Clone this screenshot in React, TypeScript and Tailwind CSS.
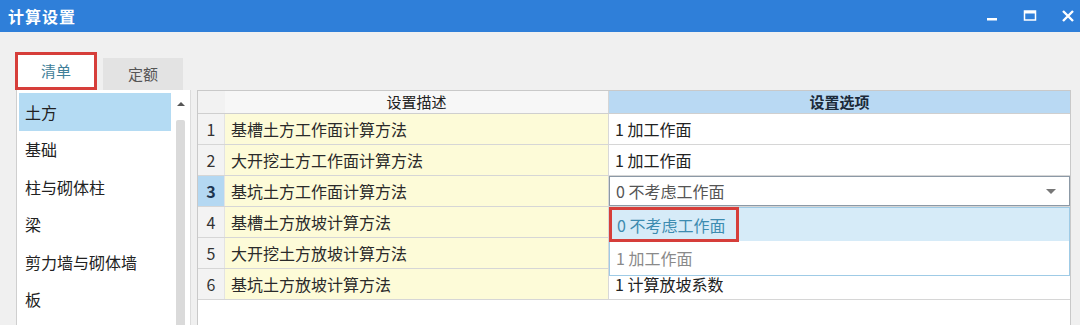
import React from 'react';

const FONT = { fontFamily: '"Noto Sans CJK SC", "Noto Sans", "Liberation Sans", sans-serif' };

const CATEGORIES = ['土方', '基础', '柱与砌体柱', '梁', '剪力墙与砌体墙', '板'];

const ROWS = [
  { no: 1, desc: '基槽土方工作面计算方法', opt: '1 加工作面' },
  { no: 2, desc: '大开挖土方工作面计算方法', opt: '1 加工作面' },
  { no: 3, desc: '基坑土方工作面计算方法', opt: '0 不考虑工作面' },
  { no: 4, desc: '基槽土方放坡计算方法', opt: '' },
  { no: 5, desc: '大开挖土方放坡计算方法', opt: '' },
  { no: 6, desc: '基坑土方放坡计算方法', opt: '1 计算放坡系数' },
];

function TitleBar() {
  return (
    <div className="h-[32px] bg-[#2f7fd9] flex items-center justify-between pl-[8px] pr-[5px]">
      <span className="text-white text-[16px] font-bold tracking-[1px]">计算设置</span>
      <div className="flex items-center gap-[24px]">
        <svg width="14" height="14" viewBox="0 0 14 14">
          <rect x="2" y="9" width="10" height="2.5" fill="#ffffff" />
        </svg>
        <svg width="14" height="14" viewBox="0 0 14 14">
          <rect x="1.5" y="2" width="11" height="9" fill="none" stroke="#ffffff" strokeWidth="1.5" />
          <rect x="1.5" y="2" width="11" height="2.5" fill="#ffffff" />
        </svg>
        <svg width="14" height="14" viewBox="0 0 14 14">
          <path d="M2 2 L12 12 M12 2 L2 12" stroke="#ffffff" strokeWidth="2.4" />
        </svg>
      </div>
    </div>
  );
}

function Tabs() {
  return (
    <div className="flex items-end pl-[15px] gap-[6px] h-[58px] pt-[20px]">
      <div className="w-[82px] h-[38px] border-[3px] border-[#d63e3a] bg-white flex items-center justify-center text-[15px] text-[#3f7f9a]">
        清单
      </div>
      <div className="w-[80px] h-[32px] bg-[#e3e3e3] flex items-center justify-center text-[15px] text-[#555555]">
        定额
      </div>
    </div>
  );
}

function CategoryList() {
  return (
    <div className="w-[175px] ml-[16px] bg-white border-l border-[#cfcfcf] flex">
      <div className="flex-1 flex flex-col pt-[3px] pl-[2px]">
        {CATEGORIES.map((c, i) => (
          <div
            key={c}
            className={`h-[37.5px] flex items-center pl-[6px] text-[16px] text-[#222222] ${i === 0 ? 'bg-[#b4dbf3]' : ''}`}
          >
            {c}
          </div>
        ))}
      </div>
      <div className="w-[20px] flex flex-col items-center border-r border-[#dcdcdc]">
        <svg width="10" height="8" viewBox="0 0 10 8" className="mt-[10px]">
          <path d="M1 6 L5 2 L9 6 Z" fill="#555555" />
        </svg>
        <div className="w-[9px] flex-1 mt-[12px] bg-[#dadada] rounded-t-[2px]" />
      </div>
    </div>
  );
}

function Grid() {
  return (
    <div className="flex-1 ml-[6px] mr-[9px] bg-white border-l border-r border-t border-[#c9c9c9] flex flex-col">
      <div className="h-[23px] flex border-b border-[#cfcfcf] text-[15px]">
        <div className="w-[27px] bg-[#f2f2f2]" />
        <div className="w-[384px] bg-[#f7f7f7] flex items-center justify-center text-[#222222] border-r border-[#d5d5d5]">
          设置描述
        </div>
        <div className="flex-1 bg-[#b9d9f3] flex items-center justify-center font-bold text-[#1b2a3a]">
          设置选项
        </div>
      </div>
      <div className="relative">
        {ROWS.map((r) => (
          <div key={r.no} className="h-[31px] flex border-b border-[#d6d6d6] text-[16px]">
            <div
              className={`w-[27px] flex items-center justify-center border-r border-[#e3e3e3] ${
                r.no === 3 ? 'bg-[#b4d8f2] font-bold text-[#1d3550]' : 'bg-[#f3f3f3] text-[#333333]'
              }`}
            >
              {r.no}
            </div>
            <div className="w-[384px] bg-[#fdfbd8] flex items-center pl-[6px] text-[#2a2a2a] border-r border-[#d8d8d8]">
              {r.desc}
            </div>
            <div
              className={`flex-1 flex items-center justify-between pl-[6px] pr-[12px] ${
                r.no === 3 ? 'border border-[#8c99a6] text-[#555555]' : 'text-[#222222]'
              }`}
            >
              <span>{r.opt}</span>
              {r.no === 3 && (
                <svg width="12" height="7" viewBox="0 0 12 7">
                  <path d="M1 1 L11 1 L6 6 Z" fill="#777777" />
                </svg>
              )}
            </div>
          </div>
        ))}
        <div className="absolute left-[411px] right-0 top-[93px] h-[69px] bg-white border border-[#9fcbe6] flex flex-col text-[16px]">
          <div className="h-[33px] bg-[#d6ebf8] flex items-center">
            <div className="h-[35px] w-[130px] -ml-[1px] border-[3px] border-[#d63e3a] flex items-center pl-[5px] text-[#3d8bb0]">
              0 不考虑工作面
            </div>
          </div>
          <div className="flex-1 flex items-center pl-[6px] text-[#8a8a8a]">1 加工作面</div>
        </div>
      </div>
    </div>
  );
}

export default function App() {
  return (
    <div className="w-[1080px] h-[325px] bg-[#f0f0f0] overflow-hidden flex flex-col" style={FONT}>
      <TitleBar />
      <Tabs />
      <div className="flex-1 flex">
        <CategoryList />
        <Grid />
      </div>
    </div>
  );
}
